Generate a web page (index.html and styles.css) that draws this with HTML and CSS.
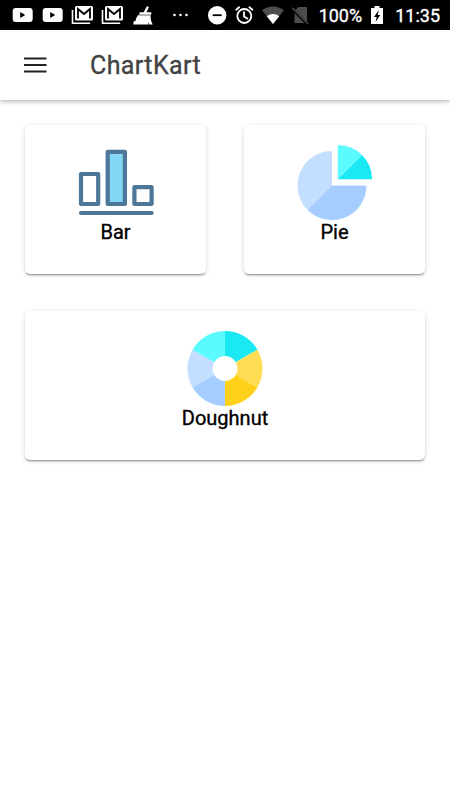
FILE: index.html
```
<!DOCTYPE html>
<html lang="en">
<head>
	<meta charset="UTF-8">
	<meta name="viewport" content="width=device-width, initial-scale=1.0">
	<link rel="stylesheet" href="styles.css">
	<title>ChartKart</title>
</head>
<body>
	<div class="status-bar">
		<div class="notifications">
			<svg viewBox="0 0 22 22"><rect x="1.7" y="4" width="20" height="14" rx="3" fill="#fff"/><path d="M9.2 8v6l5-3z"/></svg>
			<svg viewBox="0 0 22 22"><rect x="1.7" y="4" width="20" height="14" rx="3" fill="#fff"/><path d="M9.2 8v6l5-3z"/></svg>
			<svg viewBox="0 0 22 22"><path d="M1.5 6v13.2h17.7" fill="none" stroke="#fff" stroke-width="1.6"/><rect x="4" y="2" width="18" height="14.5" rx="1.5" fill="#fff"/><path d="M7 14.5V5l6 5 6-5v9.5" fill="none" stroke="#000" stroke-width="1.8"/></svg>
			<svg viewBox="0 0 22 22"><path d="M1.5 6v13.2h17.7" fill="none" stroke="#fff" stroke-width="1.6"/><rect x="4" y="2" width="18" height="14.5" rx="1.5" fill="#fff"/><path d="M7 14.5V5l6 5 6-5v9.5" fill="none" stroke="#000" stroke-width="1.8"/></svg>
			<svg viewBox="0 0 22 22" fill="#fff"><path d="M15.8 2.3l2.2.8-2.5 5.2h4.800v2.200H8.500V8.300h4.200zM8 10.500h11.500c0 3.700.5 6.900 2.200 10h-3.400l-1-2.500v2.500H2.200l.6-3.300 1.700-.2c.4-2.700 1.600-5 3.500-6.500z"/><path d="M8 11h11" stroke="#000" stroke-width=".6"/></svg>
			<svg class="more" viewBox="0 0 22 22" fill="#fff"><circle cx="4.5" cy="11" r="1.3"/><circle cx="10.5" cy="11" r="1.3"/><circle cx="16.5" cy="11" r="1.3"/></svg>
		</div>
		<div class="system">
			<svg viewBox="0 0 22 22"><circle cx="11.2" cy="11.2" r="9.2" fill="#fff"/><path d="M6.7 11.2h9" stroke="#000" stroke-width="1.8"/></svg>
			<svg viewBox="0 0 22 22" fill="none" stroke="#fff" stroke-width="1.8"><circle cx="10.3" cy="12" r="7"/><path d="M10 7.5v5l4 2.5M1.7 6.2l4-3.4M14.9 2.8l4 3.4"/></svg>
			<svg viewBox="0 0 22 22"><path d="M0 6.3a17.5 17.5 0 0 1 22 0L11 20z" fill="#4d4d4d"/><path d="M4.8 12.2a10 10 0 0 1 12.4 0L11 20z" fill="#fff"/></svg>
			<svg viewBox="0 0 22 22"><path d="M8.5 3H17v16H4.500V7z" fill="#4d4d4d"/><path d="M2 4.5L17.5 20" stroke="#000" stroke-width="3"/><path d="M2.3 3.8L18 19.7" stroke="#4d4d4d" stroke-width="1.5"/></svg>
			<span class="battery-level">100%</span>
			<svg class="battery" viewBox="0 0 12 22"><path d="M3.5 2h5v2H12v16H0V4h3.5z" fill="#fff"/><path d="M7.8 6L3 13h2.7L4.5 18 9.3 11H6.6z"/></svg>
			<span class="clock">11:35</span>
		</div>
	</div>
	<header class="toolbar">
		<button class="menu" aria-label="Menu">
			<svg viewBox="0 0 24 18" stroke="#222" stroke-width="2.1"><path d="M0 2.500h22.500M0 9h22.500M0 15.500h22.500"/></svg>
		</button>
		<h1>ChartKart</h1>
	</header>
	<main class="charts">
		<a class="card">
			<svg viewBox="-.8 0 75 75">
				<g fill="none" stroke="#4d7799" stroke-width="4.2" stroke-linejoin="round">
					<rect x="2.2" y="29" width="17.2" height="30"/>
					<rect x="28.9" y="6.8" width="17.2" height="52.2" fill="#83d6f4"/>
					<rect x="55.6" y="42.2" width="17.2" height="16.8"/>
					<path d="M2.2 68h70.600" stroke-linecap="round"/>
				</g>
			</svg>
			<span>Bar</span>
		</a>
		<a class="card">
			<svg viewBox="0 0 75 75">
				<path d="M35 40.500V6A34.500 34.500 0 0 0 10.600 64.900z" fill="#c3deff"/>
				<path d="M35 40.500L10.600 64.900A34.500 34.500 0 0 0 69.500 40.500z" fill="#a5cdff"/>
				<path d="M40.800 34.300V0a34.300 34.300 0 0 1 24.250 10.050z" fill="#5bfaff"/>
				<path d="M40.800 34.300l24.250-24.250A34.300 34.300 0 0 1 75.100 34.300z" fill="#1ae9f3"/>
			</svg>
			<span>Pie</span>
		</a>
		<a class="card wide">
			<svg viewBox="-38 -37.500 76 75">
				<path d="M0 0V-37.500A37.500 37.500 0 0 1 32.480 -18.750z" fill="#1ae9f3"/>
				<path d="M0 0L32.480 -18.750A37.500 37.500 0 0 1 32.480 18.750z" fill="#ffdc54"/>
				<path d="M0 0L32.480 18.750A37.500 37.500 0 0 1 0 37.500z" fill="#ffd11a"/>
				<path d="M0 0V37.500A37.500 37.500 0 0 1 -32.480 18.750z" fill="#a5cdff"/>
				<path d="M0 0L-32.480 18.750A37.500 37.500 0 0 1 -32.480 -18.750z" fill="#c3deff"/>
				<path d="M0 0L-32.480 -18.750A37.500 37.500 0 0 1 0 -37.500z" fill="#5bfaff"/>
				<circle r="12.500" fill="#fff"/>
			</svg>
			<span>Doughnut</span>
		</a>
	</main>
</body>
</html>
```
FILE: styles.css
```
* {
	box-sizing: border-box;
}

body {
	margin: 0;
	min-height: 100vh;
	background: #fff;
	color: #000;
	font-family: Roboto, sans-serif;
	-webkit-text-stroke: 0.35px;
}

svg {
	display: block;
	flex-shrink: 0;
	overflow: visible;
}

.status-bar {
	display: flex;
	justify-content: space-between;
	height: 30px;
	padding: 0 10px 0 11px;
	background: #000;
	color: #fff;
	font-size: 18px;
}
.status-bar svg {
	width: 22px;
	height: 22px;
}

.notifications, .system {
	display: flex;
	align-items: center;
}
.notifications {
	gap: 8px;
}
.notifications .more {
	margin-left: 9px;
}
.system {
	gap: 6px;
}
.status-bar .battery {
	width: 12px;
	margin: 0 6px 0 3px;
}
.system span {
	line-height: 30px;
	padding-top: 2px;
}
.battery-level {
	margin-left: 1px;
}

.toolbar {
	display: flex;
	align-items: center;
	height: 70px;
	padding-left: 24px;
	background: #fff;
	box-shadow: 0 1px 5px rgba(0, 0, 0, 0.35);
}
.menu {
	padding: 0;
	border: none;
	background: none;
	cursor: pointer;
}
.menu svg {
	width: 24px;
	height: 18px;
}
h1 {
	margin: 0 0 0 42px;
	color: #424242;
	font-size: 25px;
	font-weight: 400;
	letter-spacing: 0.4px;
}

.charts {
	display: grid;
	grid-template-columns: 181px 181px;
	justify-content: space-between;
	row-gap: 37px;
	padding: 25px;
}
.card {
	display: flex;
	flex-direction: column;
	align-items: center;
	height: 149px;
	padding-top: 20px;
	background: #fff;
	border-radius: 5px;
	box-shadow: 0 2px 2px -1px rgba(0, 0, 0, 0.4), 0 1px 5px rgba(0, 0, 0, 0.15);
	font-size: 20px;
	line-height: 24px;
}
.card svg {
	width: 75px;
	height: 75px;
}
.wide {
	grid-column: span 2;
}
.card.wide svg {
	width: 76px;
}
```
